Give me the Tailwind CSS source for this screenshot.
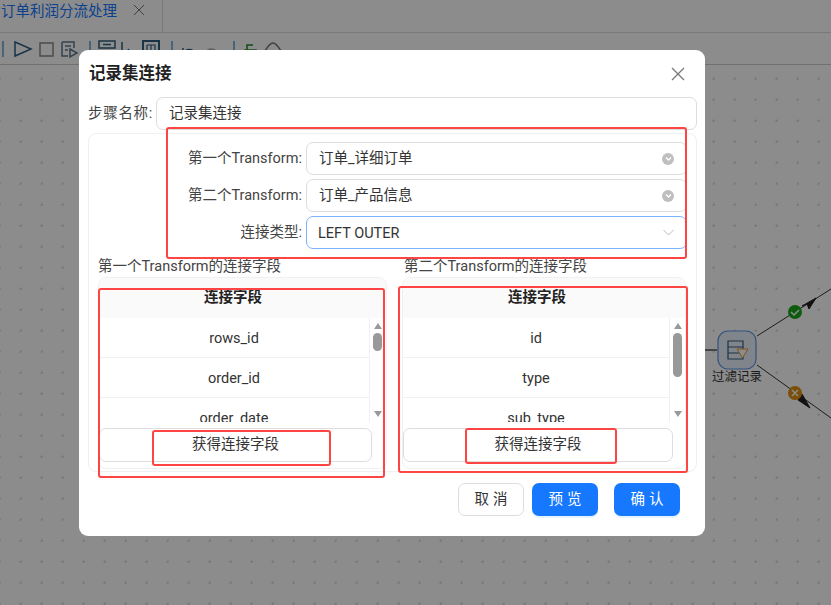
<!DOCTYPE html>
<html><head><meta charset="utf-8"><script src="https://cdn.jsdelivr.net/npm/@tailwindcss/browser@4"></script></head>
<body class="m-0 overflow-hidden">
<div class="relative w-[831px] h-[605px] overflow-hidden bg-white text-[14.5px] text-[#333] font-['Roboto','Noto_Sans_CJK_SC',sans-serif]">
  <!-- app beneath -->
  <div class="h-[33px] flex items-center border-b border-[#ddd]">
    <span class="text-[#1677ff] w-[117px] whitespace-nowrap ml-[1px] mb-[8px]">订单利润分流处理</span>
    <svg class="ml-[15px] mb-[12px]" width="12" height="12" viewBox="0 0 12 12" stroke="#777" fill="none"><path d="M1 1l10 10M11 1L1 11"/></svg>
    <div class="ml-[17px] flex-1 h-[33px] border-l border-b border-[#ddd]"></div>
  </div>
  <div class="h-[32px] flex items-center border-b border-[#ccc]">
    <svg width="300" height="24" viewBox="0 0 300 24" fill="none" stroke="#2f5f80" stroke-width="1.5">
      <path d="M3 4v16" stroke="#5c9bd0"/><path d="M15 5l16 7-16 7z"/><rect x="40" y="6" width="13" height="13" stroke="#8a8a8a"/><path d="M62 5h12v6M62 5v14h6M65 9h6M65 13h3M70 12l7 4-7 4z" stroke="#617a8c"/><path d="M90 4v16" stroke="#5c9bd0"/><rect x="99" y="4" width="16" height="7"/><path d="M103 7.500h8M122 5v14M128 12l4 6"/><rect x="143" y="4" width="16" height="15" stroke-width="2"/><path d="M147 8h8v8M151 8v8M147 8v8" stroke-width="1.200"/><path d="M172 4v16" stroke="#5c9bd0"/><path d="M183 18c2-7 9-7 12-2M183 11v6h6"/><path d="M218 16c-3-5-9-5-12-1" stroke="#aaa"/><path d="M234 4v16" stroke="#5c9bd0"/><rect x="245" y="13" width="11" height="7" stroke="#2a8a2a"/><path d="M247 13V8h6" stroke="#2a8a2a"/><path d="M265 14c3-5 6-8 8-8s5 3 8 8c-2 5-14 5-16 0z" stroke="#777"/>
    </svg>
  </div>
  <div class="absolute inset-x-0 top-[66px] bottom-0 bg-[radial-gradient(#c8c8c8_1px,transparent_1px)] bg-[size:21px_21px] bg-[position:10.5px_2.5px]"></div>
  <!-- canvas node -->
  <svg class="absolute left-[690px] top-[270px]" width="141" height="160" viewBox="0 0 141 160" fill="none">
    <path d="M0 80h27" stroke="#555" stroke-width="1.500"/>
    <path d="M67 66L141 19M67 95L141 148" stroke="#333"/>
    <path d="M112 36l14-8-7 11-2-5z" fill="#222" stroke="#222"/><path d="M112 124l8 14 -12-8z" fill="#222" stroke="#222"/>
    <rect x="28" y="61" width="38" height="38" rx="10" fill="#eaf3ff" stroke="#5b95e6" stroke-width="1.200"/>
    <path d="M38 71h15v18H38zM38 77h15M38 83h15" stroke="#365a78" stroke-width="1.200"/>
    <path d="M47 79h11l-5.500 9z" fill="#fff" stroke="#e8972a"/>
    <circle cx="105" cy="42" r="7" fill="#19a619"/><path d="M101 42l3 3 5-5" stroke="#fff" stroke-width="1.500"/>
    <circle cx="105" cy="123" r="7" fill="#e0900e"/><path d="M102 120l6 6M108 120l-6 6" stroke="#fff" stroke-width="1.500"/>
  </svg>
  <span class="absolute left-[712px] top-[368px] text-[12.500px] leading-[18px] whitespace-nowrap">过滤记录</span>
  <!-- mask -->
  <div class="absolute inset-0 bg-black/45"></div>

  <!-- modal -->
  <div class="absolute left-[79px] top-[50px] w-[626px] h-[486px] bg-white rounded-[9px] px-[9px] flex flex-col">
    <div class="h-[47px] flex items-center justify-between shrink-0">
      <span class="text-[16.500px] font-bold text-[#222] leading-[50px] ml-[1px]">记录集连接</span>
      <svg class="mr-[11px]" width="14" height="14" viewBox="0 0 14 14" fill="none" stroke="#777" stroke-width="1.300"><path d="M1 1l12 12M13 1L1 13"/></svg>
    </div>
    <div class="flex items-center h-[33px] shrink-0">
      <span class="w-[68px] text-[#444] whitespace-nowrap tracking-[0.7px]">步骤名称:</span>
      <div class="flex-1 h-[33px] border border-[#ddd] rounded-[7px] flex items-center pl-[12px] -mr-[1px]">记录集连接</div>
    </div>
    <div class="mt-[3px] flex-1 relative border border-[#f0f0f0] rounded-[8px] mr-[-1px] mb-[64px]">
      <div class="flex flex-col gap-[4px] pt-[8px] pr-[9px]">
        <div class="flex items-center h-[33px]"><span class="w-[217px] text-right pr-[4px] text-[#444] whitespace-nowrap">第一个Transform:</span>
          <div class="flex-1 h-[33px] border border-[#ddd] rounded-[7px] flex items-center justify-between pl-[12px] pr-[12px]">订单_详细订单<span class="w-[12px] h-[12px] rounded-full bg-[#bfbfbf] flex items-center justify-center"><svg width="7" height="7" viewBox="0 0 7 7" fill="none" stroke="#fff" stroke-width="1.300"><path d="M1 2.500l2.500 2.500L6 2.500"/></svg></span></div></div>
        <div class="flex items-center h-[33px]"><span class="w-[217px] text-right pr-[4px] text-[#444] whitespace-nowrap">第二个Transform:</span>
          <div class="flex-1 h-[33px] border border-[#ddd] rounded-[7px] flex items-center justify-between pl-[12px] pr-[12px]">订单_产品信息<span class="w-[12px] h-[12px] rounded-full bg-[#bfbfbf] flex items-center justify-center"><svg width="7" height="7" viewBox="0 0 7 7" fill="none" stroke="#fff" stroke-width="1.300"><path d="M1 2.500l2.500 2.500L6 2.500"/></svg></span></div></div>
        <div class="flex items-center h-[33px]"><span class="w-[217px] text-right pr-[4px] text-[#444] whitespace-nowrap">连接类型:</span>
          <div class="flex-1 h-[33px] border border-[#7ab4ff] rounded-[7px] flex items-center justify-between pl-[11px] pr-[12px]"><span class="pt-[2px]">LEFT OUTER</span><svg width="11" height="7" viewBox="0 0 11 7" fill="none" stroke="#bbb"><path d="M.500 1l5 5 5-5"/></svg></div></div>
      </div>
      <div class="absolute left-[9px] top-[123px] text-[#444] leading-[20px] whitespace-nowrap">第一个Transform的连接字段</div>
      <div class="absolute left-[315px] top-[123px] text-[#444] leading-[20px] whitespace-nowrap">第二个Transform的连接字段</div>
      <!-- left table -->
      <div class="absolute left-[9px] top-[143px] w-[289px] h-[192px] border border-[#f0f0f0] rounded-[8px] overflow-hidden">
        <div class="h-[40px] bg-[#fafafa] text-center font-bold text-[#222] leading-[40px] pr-[19px]">连接字段</div>
        <div class="flex h-[104px]">
          <div class="flex-1 overflow-hidden text-center">
            <div class="h-[40px] leading-[42px] border-b border-[#f0f0f0]">rows_id</div>
            <div class="h-[40px] leading-[42px] border-b border-[#f0f0f0]">order_id</div>
            <div class="h-[40px] leading-[42px]">order_date</div>
          </div>
          <div class="w-[16px] mr-[1px] border-l border-[#f0f0f0] flex flex-col items-center py-[5px]">
            <span class="border-x-[4px] border-x-transparent border-b-[6px] border-b-[#999]"></span>
            <span class="w-[9px] h-[18px] rounded-[5px] bg-[#999] mt-[4px] mb-auto"></span>
            <span class="border-x-[4px] border-x-transparent border-t-[6px] border-t-[#999]"></span>
          </div>
        </div>
        <div class="mt-[6px] w-[273px] h-[34px] border border-[#ddd] rounded-[7px] text-center leading-[31px]">获得连接字段</div>
      </div>
      <!-- right table -->
      <div class="absolute left-[313px] top-[143px] w-[284px] h-[192px] border border-[#f0f0f0] rounded-[8px] overflow-hidden">
        <div class="h-[40px] bg-[#fafafa] text-center font-bold text-[#222] leading-[40px] pr-[14px]">连接字段</div>
        <div class="flex h-[104px]">
          <div class="flex-1 overflow-hidden text-center">
            <div class="h-[40px] leading-[42px] border-b border-[#f0f0f0]">id</div>
            <div class="h-[40px] leading-[42px] border-b border-[#f0f0f0]">type</div>
            <div class="h-[40px] leading-[42px]">sub_type</div>
          </div>
          <div class="w-[16px] border-l border-[#f0f0f0] flex flex-col items-center py-[5px]">
            <span class="border-x-[4px] border-x-transparent border-b-[6px] border-b-[#999]"></span>
            <span class="w-[9px] h-[44px] rounded-[5px] bg-[#999] mb-auto mt-[4px]"></span>
            <span class="border-x-[4px] border-x-transparent border-t-[6px] border-t-[#999]"></span>
          </div>
        </div>
        <div class="mt-[6px] w-[270px] h-[34px] border border-[#ddd] rounded-[7px] text-center leading-[31px]">获得连接字段</div>
      </div>
    </div>
    <div class="absolute right-[25px] top-[433px] flex">
      <div class="w-[66px] h-[33px] border border-[#ddd] rounded-[7px] flex items-center justify-center tracking-[4px] pl-[4px]">取消</div>
      <div class="ml-[8px] w-[66px] h-[33px] bg-[#1677ff] text-white rounded-[7px] flex items-center justify-center tracking-[4px] pl-[4px] shadow-[0_2px_0_rgba(5,145,255,0.1)]">预览</div>
      <div class="ml-[16px] w-[66px] h-[33px] bg-[#1677ff] text-white rounded-[7px] flex items-center justify-center tracking-[4px] pl-[4px] shadow-[0_2px_0_rgba(5,145,255,0.1)]">确认</div>
    </div>
  </div>

  <!-- red annotation boxes -->
  <div class="absolute left-[166px] top-[127px] w-[521px] h-[132px] border-2 border-[#f44] rounded-[3px]"></div>
  <div class="absolute left-[98px] top-[288px] w-[287px] h-[190px] border-2 border-[#f44] rounded-[3px]"></div>
  <div class="absolute left-[398px] top-[286px] w-[290px] h-[187px] border-2 border-[#f44] rounded-[3px]"></div>
  <div class="absolute left-[152px] top-[430px] w-[179px] h-[36px] border-2 border-[#f44] rounded-[3px]"></div>
  <div class="absolute left-[465px] top-[428px] w-[152px] h-[36px] border-2 border-[#f44] rounded-[3px]"></div>
</div>
</body></html>
